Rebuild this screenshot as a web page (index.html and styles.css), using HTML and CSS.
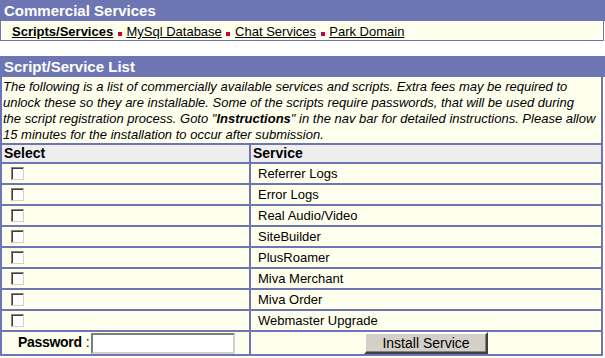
FILE: index.html
```html
<!DOCTYPE html>
<html lang="en">
<head>
	<meta charset="UTF-8">
	<title>Commercial Services</title>
	<link rel="stylesheet" href="styles.css">
</head>
<body>

<div class="panel">
	<div class="title">Commercial Services</div>
	<div class="nav">
		<a href="#" class="current">Scripts/Services</a>
		<span class="dot"></span>
		<a href="#">MySql Database</a>
		<span class="dot"></span>
		<a href="#">Chat Services</a>
		<span class="dot"></span>
		<a href="#">Park Domain</a>
	</div>
</div>

<div class="panel list">
	<div class="title">Script/Service List</div>
	<div class="intro">
		The following is a list of commercially available services and scripts. Extra fees may be required to<br>
		unlock these so they are installable. Some of the scripts require passwords, that will be used during<br>
		the script registration process. Goto "<b>Instructions</b>" in the nav bar for detailed instructions. Please allow<br>
		15 minutes for the installation to occur after submission.
	</div>
	<form>
	<table class="services" cellspacing="0">
		<tr class="head">
			<th class="sel">Select</th>
			<th>Service</th>
		</tr>
		<tr><td class="sel"><input type="checkbox"></td><td>Referrer Logs</td></tr>
		<tr><td class="sel"><input type="checkbox"></td><td>Error Logs</td></tr>
		<tr><td class="sel"><input type="checkbox"></td><td>Real Audio/Video</td></tr>
		<tr><td class="sel"><input type="checkbox"></td><td>SiteBuilder</td></tr>
		<tr><td class="sel"><input type="checkbox"></td><td>PlusRoamer</td></tr>
		<tr><td class="sel"><input type="checkbox"></td><td>Miva Merchant</td></tr>
		<tr><td class="sel"><input type="checkbox"></td><td>Miva Order</td></tr>
		<tr><td class="sel"><input type="checkbox"></td><td>Webmaster Upgrade</td></tr>
		<tr class="submit">
			<td class="pass"><b>Password</b> : <input type="password" class="pw"></td>
			<td class="go"><button type="button">Install Service</button></td>
		</tr>
	</table>
	</form>
</div>

</body>
</html>
```

FILE: styles.css
```css
body {
	margin: 0;
	font-family: "Liberation Sans", Arial, sans-serif;
	font-size: 13px;
	color: #000;
	background: #fff;
}

.panel {
	width: 605px;
}

.title {
	background-color: #6d76b3;
	color: #fff;
	font-weight: bold;
	font-size: 15px;
	height: 21px;
	line-height: 22px;
	padding-left: 4px;
}

.nav {
	width: 591px;
	height: 17px;
	line-height: 17px;
	padding: 2px 0 0 11px;
	background-color: #ffffee;
	border: 1px solid #6d76b3;
	border-top: none;
	white-space: nowrap;
}

.nav a {
	color: #000;
	text-decoration: underline;
}

.nav a.current {
	font-weight: bold;
}

.dot {
	display: inline-block;
	width: 4px;
	height: 4px;
	background-color: #cc0033;
	vertical-align: 0;
	margin: 0 1px;
}

.list {
	margin-top: 15px;
}

.intro {
	box-sizing: border-box;
	width: 603px;
	background-color: #ffffee;
	border-left: 2px solid #6d76b3;
	border-right: 2px solid #6d76b3;
	font-style: italic;
	line-height: 16px;
	padding: 2px 0 0 1px;
	white-space: nowrap;
}

form {
	margin: 0;
}

.services {
	width: 603px;
	border: 1px solid #6d76b3;
	border-collapse: separate;
	background-color: #ffffee;
}

.services th,
.services td {
	border: 1px solid #6d76b3;
	height: 19px;
	padding: 0 0 0 7px;
	text-align: left;
	vertical-align: middle;
}

.services th {
	background-color: #eeeeee;
	font-size: 14px;
	height: 17px;
	line-height: 17px;
	padding-left: 2px;
}

.services .sel {
	width: 240px;
}

.services input[type="checkbox"] {
	appearance: none;
	-webkit-appearance: none;
	display: block;
	box-sizing: border-box;
	width: 13px;
	height: 13px;
	margin: 0 0 0 2px;
	background-color: #fff;
	border: 1px solid;
	border-color: #808080 #d4d0c8 #d4d0c8 #808080;
	box-shadow: inset 1px 1px 0 #404040;
}

.services td.pass {
	padding-left: 16px;
	height: 22px;
	font-size: 14px;
	white-space: nowrap;
}

.pass b {
	letter-spacing: -0.3px;
}

.pw {
	width: 144px;
	height: 21px;
	box-sizing: border-box;
	border: 2px inset #d4d0c8;
	vertical-align: middle;
	margin: 0 0 0 -2px;
}

.services td.go {
	text-align: center;
	padding: 0;
}

.go button {
	font-family: "Liberation Sans", Arial, sans-serif;
	font-size: 14px;
	color: #000;
	width: 124px;
	height: 22px;
	background-color: #d4d0c8;
	border: 2px solid;
	border-color: #ffffff #404040 #404040 #ffffff;
	box-shadow: inset -1px -1px 0 #808080;
	margin: 0;
	padding: 0;
}
```
